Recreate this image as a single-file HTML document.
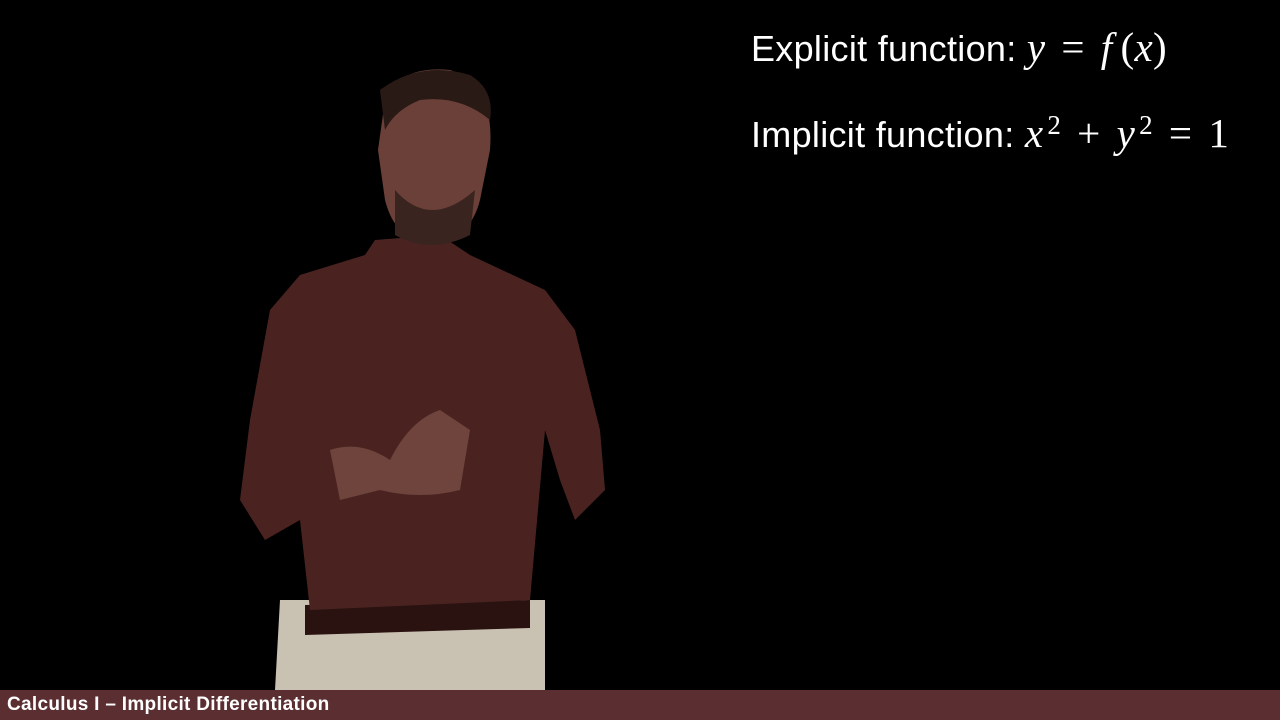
<!DOCTYPE html>
<html><head><style>
body{margin:0;width:1280px;height:720px;background:#000;overflow:hidden;position:relative;font-family:"Liberation Sans",sans-serif}
.t{position:absolute;left:751px;color:#fff;font-size:36px;white-space:nowrap;letter-spacing:0.3px}
.m{font-family:"Liberation Serif",serif;font-style:italic;font-size:41px}
.n{font-family:"Liberation Serif",serif;font-size:41px}
.o{font-family:"Liberation Serif",serif;font-size:41px;margin:0 16px}
sup{font-size:27px;font-family:"Liberation Serif",serif;margin-left:4px}
.bar{position:absolute;left:0;top:690px;width:1280px;height:30px;background:#5b2f31}
.bar span{position:absolute;left:7px;top:4px;color:#fff;font-weight:bold;font-size:19px;letter-spacing:0.3px}
</style></head><body>
<svg width="1280" height="720" style="position:absolute;left:0;top:0">
<path d="M280 600 L545 600 L545 690 L275 690 Z" fill="#c9c1b2"/>
<path d="M305 605 L530 600 L530 628 L305 635 Z" fill="#2a1210"/>
<path d="M375 240 L440 235 L470 255 L545 290 L575 330 L600 430 L605 490 L575 520 L560 480 L545 430 L530 600 L310 610 L300 520 L265 540 L240 500 L250 420 L270 310 L300 275 L365 255 Z" fill="#4a2321"/>
<path d="M385 100 Q400 65 450 70 Q495 85 490 150 L480 200 Q470 240 430 245 Q395 240 385 200 L378 150 Z" fill="#6a4038"/>
<path d="M380 90 Q420 60 470 75 Q495 90 490 120 Q460 95 420 100 Q395 110 385 130 Z" fill="#2a1a16"/>
<path d="M395 190 Q430 230 475 190 L470 235 Q430 255 395 235 Z" fill="#3a2420"/>
<path d="M330 450 Q360 440 390 460 Q410 420 440 410 L470 430 L460 490 Q420 500 380 490 L340 500 Z" fill="#6e443c"/>
</svg>
<div class="t" style="top:23px">Explicit function: <span class="m">y</span><span class="o">=</span><span class="m">f</span><span class="n" style="margin-left:8px">(</span><span class="m">x</span><span class="n">)</span></div>
<div class="t" style="top:109px">Implicit function: <span class="m">x</span><sup>2</sup><span class="o">+</span><span class="m">y</span><sup>2</sup><span class="o">=</span><span class="n">1</span></div>
<div class="bar"><span>Calculus I – Implicit Differentiation</span></div>
</body></html>
